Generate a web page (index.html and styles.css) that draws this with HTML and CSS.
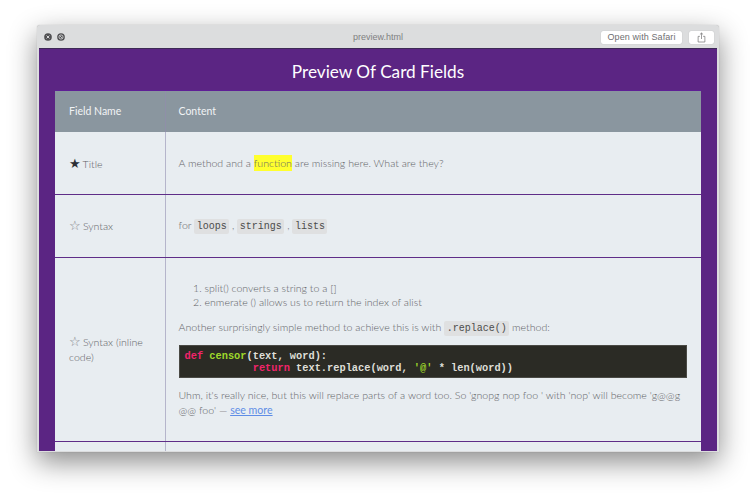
FILE: index.html
```html
<!DOCTYPE html>
<html lang="en">
<head>
<meta charset="utf-8">
<title>preview.html</title>
<link rel="stylesheet" href="styles.css">
</head>
<body>
<div class="window">
  <header class="titlebar">
    <div class="lights">
      <svg class="light" viewBox="0 0 10 10"><circle cx="5" cy="5" r="4.8" fill="#505052"/><path d="M3.2 3.2l3.6 3.6M6.8 3.2l-3.6 3.6" stroke="#dcdddf" stroke-width="1.2"/></svg>
      <svg class="light" viewBox="0 0 10 10"><circle cx="5" cy="5" r="4.8" fill="#505052"/><circle cx="5" cy="5" r="2.6" fill="none" stroke="#dcdddf" stroke-width="1"/><path d="M3.2 3.2l3.6 3.6" stroke="#dcdddf" stroke-width="1"/></svg>
    </div>
    <div class="doc-title">preview.html</div>
    <div class="actions">
      <button class="btn btn-open">Open with Safari</button>
      <button class="btn btn-share"><svg class="share" viewBox="0 0 12 14"><path d="M3.8 5.5H1.5v7.5h9V5.500H8.200M6 9V1M3.900 3 6 1l2.100 2" fill="none" stroke="#6b6b6d" stroke-width=".9"/></svg></button>
    </div>
  </header>
  <main class="page">
    <h1 class="heading">Preview Of Card Fields</h1>
    <table class="fields">
      <thead>
        <tr><th class="col-name">Field Name</th><th>Content</th></tr>
      </thead>
      <tbody>
        <tr class="row-a">
          <td><span class="star star-on">★</span> Title</td>
          <td>A method and a <mark>function</mark> are missing here. What are they?</td>
        </tr>
        <tr class="row-b">
          <td><span class="star">☆</span> Syntax</td>
          <td>for <code>loops</code> , <code>strings</code> , <code>lists</code></td>
        </tr>
        <tr class="row-c">
          <td><span class="star">☆</span> Syntax (inline code)</td>
          <td>
            <ol class="steps">
              <li>split() converts a string to a []</li>
              <li>enmerate () allows us to return the index of alist</li>
            </ol>
            <p class="para">Another surprisingly simple method to achieve this is with <code>.replace()</code> method:</p>
            <pre class="block"><span class="kw">def</span> <span class="fn">censor</span>(text, word):
           <span class="kw">return</span> text.replace(word, <span class="str">'@'</span> * len(word))</pre>
            <p class="para last">Uhm, it's really nice, but this will replace parts of a word too. So 'gnopg nop foo ' with 'nop' will become 'g@@g @@ foo' — <a href="#">see more</a></p>
          </td>
        </tr>
        <tr class="row-d"><td></td><td></td></tr>
      </tbody>
    </table>
  </main>
</div>
</body>
</html>
```
FILE: styles.css
```css
html, body { margin: 0; height: 100%; }
body { background: #fff; overflow: hidden; padding: 25px 37px 0; box-sizing: border-box; height: 501px; font-family: Lato, "Noto Sans", sans-serif; }
.window { width: 682px; height: 427px; background: #dcddde; border-radius: 3px 3px 0 0; box-shadow: 0 10px 28px rgba(0,0,0,.46), 0 0 1px rgba(0,0,0,.3); display: flex; flex-direction: column; overflow: hidden; padding: 0 2px 1px; box-sizing: border-box; }
.titlebar { height: 23px; box-sizing: border-box; padding: 1px 3px 0 5px; flex: none; display: flex; align-items: center; position: relative; }
.lights { display: flex; gap: 5px; }
.light { width: 8px; height: 8px; display: block; }
.doc-title { position: absolute; left: 0; right: 0; text-align: center; font-size: 9px; color: #808082; font-family: "Liberation Sans", sans-serif; }
.actions { margin-left: auto; display: flex; gap: 7px; }
.btn { height: 13px; background: #fff; border: 0; border-radius: 2px; padding: 0; font: 9px "Liberation Sans", sans-serif; color: #6f6f71; box-shadow: 0 0 1px rgba(0,0,0,.25); display: flex; align-items: center; justify-content: center; }
.btn-open { width: 81px; letter-spacing: .1px; }
.btn-share { width: 25px; }
.share { width: 9px; height: 11px; display: block; }
.page { flex: 1; min-height: 0; background: #5b2583; padding: 0 16px; overflow: hidden; border-top: 1px solid #3d2a55; }
.heading { margin: 0; height: 42px; line-height: 46px; text-align: center; color: #fff; font-weight: 400; font-size: 17.2px; }
.fields { width: 646px; table-layout: fixed; border-collapse: collapse; font-size: 10.6px; font-weight: 300; color: #5f6266; background: #e8edf1; box-shadow: 0 -1px 0 #5f1f96; }
.col-name { width: 110px; }
th, td { box-sizing: border-box; }
th { background: #8a969f; color: #f1f3f5; font-weight: 400; text-align: left; padding: 0 14px 2px; height: 41px; font-size: 10.5px; border-right: 1px solid #8f8fa8; }
th:last-child { border-right: 0; padding-left: 13px; }
td { padding: 0 14px; border-right: 1px solid #b5b5cb; border-bottom: 1px solid #5f2d88; line-height: 15px; }
td:last-child { border-right: 0; padding-left: 13px; }
.row-a td { height: 62px; padding-top: 2px; }
.row-b td { height: 63px; padding-top: 1px; }
.row-c td { height: 184px; padding-top: 1px; }
.row-c td:last-child { vertical-align: top; padding-top: 23px; }
.row-d td { height: 30px; border-bottom: 0; }
.star { font-family: "DejaVu Sans", sans-serif; font-size: 13px; color: #7f8286; margin-right: -1px; }
.star-on { color: #2c2f36; }
mark { background: #ffff2e; color: #5f6266; padding: 2px 0; }
code { font-family: "Liberation Mono", monospace; font-size: 10px; font-weight: 400; background: #dfe0e1; color: #4c4c4c; padding: 2px 2.5px; border-radius: 2px; }
.steps { margin: 0 0 11px; padding: 0 0 0 26px; line-height: 14px; }
.para { margin: 0 0 9px; line-height: 15px; }
.last { margin: 0; }
.block { margin: 0 0 10px; background: #2b2b25; color: #dfdfd8; font: 700 10.33px/12px "Liberation Mono", monospace; padding: 4px 5px 3px; height: 24px; border: 1px solid #4a4a45; white-space: pre; }
.kw { color: #f1246b; }
.fn { color: #9fd82b; }
.str { color: #9fd82b; }
a { color: #5f8de6; font-weight: 400; }
```
